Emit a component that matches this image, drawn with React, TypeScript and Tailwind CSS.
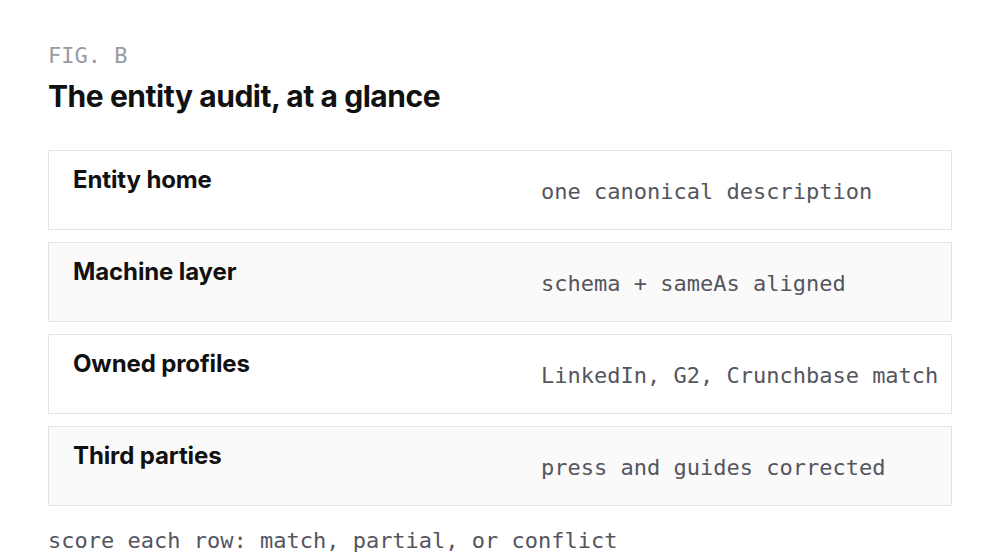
import React from "react";

const rows = [
  { t: "Entity home", d: "one canonical description", alt: false },
  { t: "Machine layer", d: "schema + sameAs aligned", alt: true },
  { t: "Owned profiles", d: "LinkedIn, G2, Crunchbase match", alt: false },
  { t: "Third parties", d: "press and guides corrected", alt: true },
];

export default function App() {
  return (
    <div className="w-[1000px] h-[560px] bg-white overflow-hidden px-12 pt-[41px]" style={{ fontFamily: "Inter, sans-serif" }}>
      <div className="text-[22px] leading-[30px] text-[#9a9aa3] font-['DejaVu_Sans_Mono',monospace]">FIG. B</div>
      <h1 className="mt-[7px] text-[30px] leading-[36px] font-bold tracking-[-0.015em] text-[#111]">The entity audit, at a glance</h1>
      <div className="mt-[36px] flex flex-col gap-3">
        {rows.map((r) => (
          <div
            key={r.t}
            className={`h-[80px] border border-[#e4e4e7] flex px-6 ${r.alt ? "bg-[#fafafa]" : "bg-white"}`}
          >
            <div className="w-[468px] shrink-0 pt-[14px] text-[24px] leading-[30px] font-bold tracking-[-0.005em] text-[#111]">{r.t}</div>
            <div className="pt-[26px] text-[22px] leading-[30px] text-[#55555e] whitespace-nowrap font-['DejaVu_Sans_Mono',monospace]">{r.d}</div>
          </div>
        ))}
      </div>
      <div className="mt-[20px] text-[22px] leading-[30px] text-[#55555e] font-['DejaVu_Sans_Mono',monospace]">score each row: match, partial, or conflict</div>
    </div>
  );
}
